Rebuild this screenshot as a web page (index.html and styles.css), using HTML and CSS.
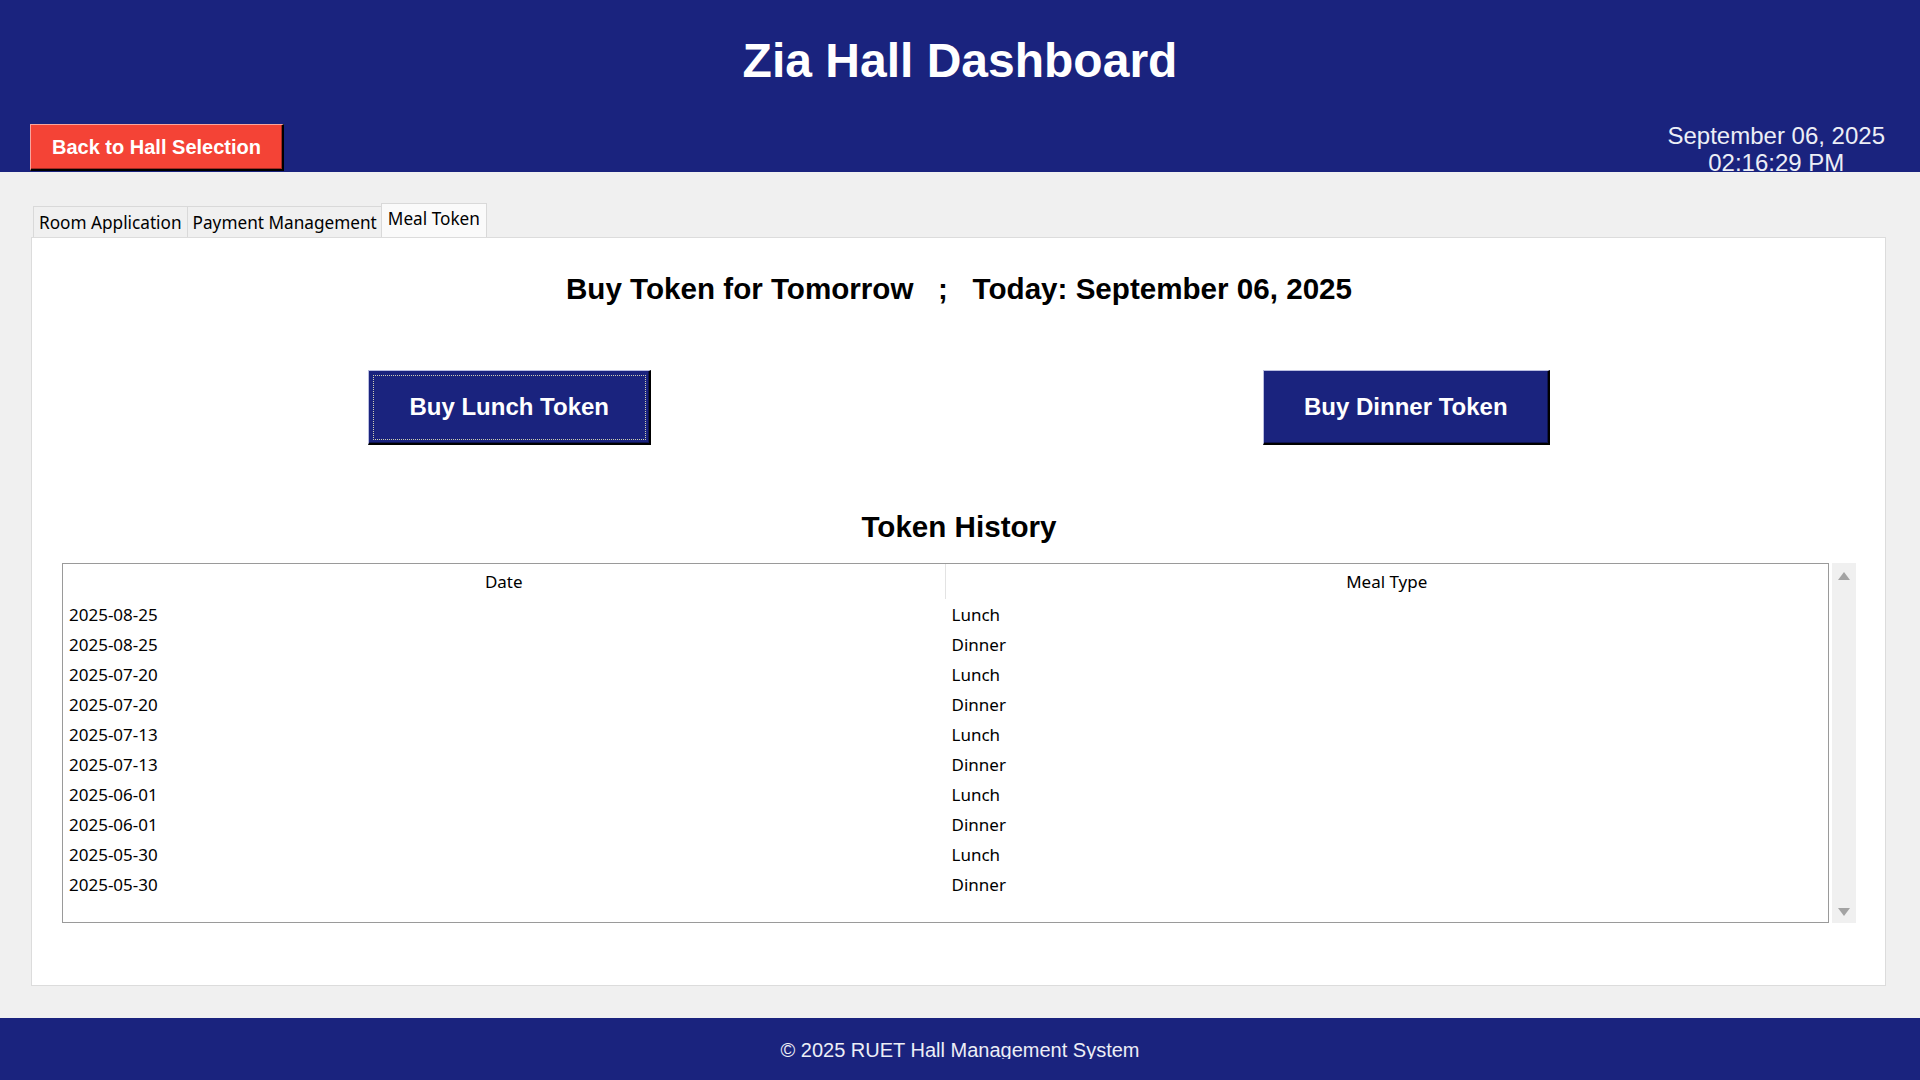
FILE: index.html
```html
<!DOCTYPE html>
<html lang="en">
<head>
<meta charset="utf-8">
<title>Zia Hall Dashboard</title>
<link rel="stylesheet" href="styles.css">
</head>
<body>
<header class="header">
  <h1 class="title">Zia Hall Dashboard</h1>
  <div class="header-row">
    <button class="back-btn">Back to Hall Selection</button>
    <div class="clock">
      <div>September 06, 2025</div>
      <div>02:16:29 PM</div>
    </div>
  </div>
</header>
<main class="main">
  <div class="tabs">
    <div class="tab">Room Application</div>
    <div class="tab">Payment Management</div>
    <div class="tab tab-active">Meal Token</div>
  </div>
  <section class="panel">
    <h2 class="heading">Buy Token for Tomorrow   ;   Today: September 06, 2025</h2>
    <div class="buy-row">
      <button class="buy-btn buy-focus">Buy Lunch Token</button>
      <button class="buy-btn">Buy Dinner Token</button>
    </div>
    <h2 class="heading history-title">Token History</h2>
    <div class="table-wrap">
      <div class="table">
        <div class="thead">
          <div class="th th-sep">Date</div>
          <div class="th">Meal Type</div>
        </div>
        <div class="tr"><div class="td">2025-08-25</div><div class="td">Lunch</div></div>
        <div class="tr"><div class="td">2025-08-25</div><div class="td">Dinner</div></div>
        <div class="tr"><div class="td">2025-07-20</div><div class="td">Lunch</div></div>
        <div class="tr"><div class="td">2025-07-20</div><div class="td">Dinner</div></div>
        <div class="tr"><div class="td">2025-07-13</div><div class="td">Lunch</div></div>
        <div class="tr"><div class="td">2025-07-13</div><div class="td">Dinner</div></div>
        <div class="tr"><div class="td">2025-06-01</div><div class="td">Lunch</div></div>
        <div class="tr"><div class="td">2025-06-01</div><div class="td">Dinner</div></div>
        <div class="tr"><div class="td">2025-05-30</div><div class="td">Lunch</div></div>
        <div class="tr"><div class="td">2025-05-30</div><div class="td">Dinner</div></div>
      </div>
      <div class="scrollbar">
        <span class="arrow-up"></span>
        <span class="arrow-down"></span>
      </div>
    </div>
  </section>
</main>
<footer class="footer">
  <div class="footer-text">© 2025 RUET Hall Management System</div>
</footer>
</body>
</html>
```
FILE: styles.css
```css
* {
  box-sizing: border-box;
}

html, body {
  margin: 0;
  padding: 0;
}

body {
  width: 1920px;
  height: 1080px;
  overflow: hidden;
  background: #f0f0f0;
  font-family: "Liberation Sans", Arial, sans-serif;
  color: #000;
}

/* ---------- header ---------- */
.header {
  height: 172px;
  overflow: hidden;
  background: #1a237e;
  padding-top: 33px;
}

.title {
  margin: 0;
  text-align: center;
  font-size: 48px;
  line-height: 55px;
  font-weight: bold;
  color: #ffffff;
}

.header-row {
  margin-top: 34px;
  display: flex;
  justify-content: space-between;
  align-items: flex-start;
  padding: 0 35px 0 30px;
}

.back-btn {
  margin-top: 2px;
  height: 47px;
  padding: 0 21px;
  background: #f44336;
  color: #ffffff;
  font-family: "Liberation Sans", Arial, sans-serif;
  font-size: 20px;
  font-weight: bold;
  border-style: solid;
  border-width: 1px 2px 2px 1px;
  border-color: #f9a49c #000000 #000000 #f9a49c;
  box-shadow: inset -1px -1px 0 #a02a22;
}

.clock {
  text-align: center;
  font-size: 24px;
  line-height: 27px;
  color: #eceef6;
}

/* ---------- main ---------- */
.main {
  height: 846px;
  padding-top: 31px;
}

.tabs {
  display: flex;
  align-items: flex-end;
  height: 34px;
  margin-left: 33px;
  font-family: "Noto Sans", "Open Sans", sans-serif;
  font-size: 17.2px;
}

.tab {
  height: 31px;
  line-height: 31px;
  padding: 0 5px;
  background: #f0f0f0;
  border: 1px solid #d9d9d9;
  border-bottom: none;
  white-space: nowrap;
  color: #000;
}

.tab + .tab {
  border-left: none;
}

.tab-active {
  height: 34px;
  line-height: 30px;
  margin-left: -2px;
  padding: 0 6px;
  background: #fafafa;
  border-left: 1px solid #d9d9d9 !important;
}

.panel {
  height: 749px;
  margin: 0 34px 0 31px;
  background: #ffffff;
  border: 1px solid #dcdcdc;
  padding: 34px 29px 0 30px;
}

.heading {
  margin: 0;
  text-align: center;
  font-size: 29.6px;
  line-height: 33px;
  font-weight: bold;
  white-space: pre;
  color: #000;
}

.buy-row {
  margin-top: 65px;
  display: flex;
  justify-content: center;
  gap: 612px;
}

.buy-btn {
  height: 75px;
  padding: 0 40px;
  background: #1a237e;
  color: #ffffff;
  font-family: "Liberation Sans", Arial, sans-serif;
  font-size: 24px;
  font-weight: bold;
  border-style: solid;
  border-width: 1px 2px 2px 1px;
  border-color: #b9bde0 #000000 #000000 #b9bde0;
  box-shadow: inset -1px -1px 0 #0e1350;
}

.buy-focus {
  outline: 1px dotted #cfcfb0;
  outline-offset: -6px;
}

.history-title {
  margin-top: 65px;
}

/* ---------- table ---------- */
.table-wrap {
  margin-top: 20px;
  height: 360px;
  display: flex;
  gap: 3px;
}

.table {
  flex: 1;
  border: 1px solid #9a9a9a;
  font-family: "Noto Sans", "Open Sans", sans-serif;
  font-size: 17px;
  color: #000;
}

.thead {
  display: grid;
  grid-template-columns: 1fr 1fr;
  height: 35px;
}

.th {
  text-align: center;
  line-height: 35px;
}

.th-sep {
  border-right: 1px solid #e3e3e3;
}

.tr {
  display: grid;
  grid-template-columns: 1fr 1fr;
  height: 30px;
  line-height: 31px;
}

.td {
  padding-left: 6px;
}

.td + .td {
  padding-left: 6px;
}

.scrollbar {
  width: 24px;
  background: #f0f0f0;
  display: flex;
  flex-direction: column;
  justify-content: space-between;
  align-items: center;
  padding: 9px 0 7px;
}

.arrow-up,
.arrow-down {
  width: 0;
  height: 0;
  border-left: 6px solid transparent;
  border-right: 6px solid transparent;
}

.arrow-up {
  border-bottom: 8px solid #a3a3a3;
}

.arrow-down {
  border-top: 8px solid #a3a3a3;
}

/* ---------- footer ---------- */
.footer {
  height: 62px;
  background: #1a237e;
  padding-top: 21px;
}

.footer-text {
  height: 20px;
  overflow: hidden;
  text-align: center;
  font-size: 20px;
  line-height: 23px;
  color: #eceef6;
}
```
